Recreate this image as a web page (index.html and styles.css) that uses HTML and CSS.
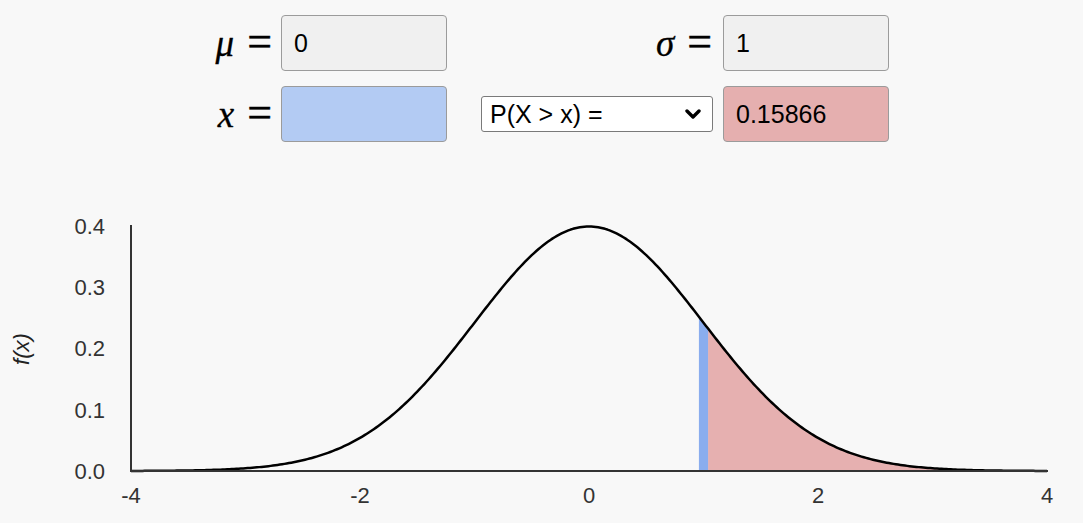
FILE: index.html
```html
<!DOCTYPE html>
<html>
<head>
<meta charset="utf-8">
<link rel="stylesheet" href="styles.css">
</head>
<body>
<div class="controls">
  <label class="mlabel"><i class="var">μ</i><span class="eq">=</span></label>
  <input class="box box-gray" type="text" value="0">
  <label class="mlabel mlabel-right"><i class="var">σ</i><span class="eq">=</span></label>
  <input class="box box-gray" type="text" value="1">

  <label class="mlabel"><i class="var">x</i><span class="eq">=</span></label>
  <input class="box box-blue" type="text" value="">
  <div class="select-wrap">
    <select class="prob">
      <option>P(X &lt; x) =</option>
      <option selected>P(X &gt; x) =</option>
      <option>P(X = x) =</option>
    </select>
    <svg class="chev" width="16" height="11" viewBox="0 0 16 11"><path d="M2 2 L8 8 L14 2" fill="none" stroke="#000" stroke-width="3.4" stroke-linecap="round" stroke-linejoin="round"/></svg>
  </div>
  <input class="box box-red" type="text" value="0.15866">
</div>
<svg class="chart" width="1083" height="381" viewBox="0 142 1083 381">
  <path id="areaRed" fill="#e6b0b0"/>
  <path id="areaBlue" fill="#8aadee"/>
  <path id="curve" fill="none" stroke="#000" stroke-width="2.5" stroke-linejoin="round"/>
  <line x1="131" y1="225" x2="131" y2="472" stroke="#333" stroke-width="2"/>
  <line x1="130" y1="471" x2="1048" y2="471" stroke="#333" stroke-width="2"/>
  <g class="ytick" text-anchor="end">
    <text x="105" y="226" dy="0.36em">0.4</text>
    <text x="105" y="287" dy="0.36em">0.3</text>
    <text x="105" y="348" dy="0.36em">0.2</text>
    <text x="105" y="410" dy="0.36em">0.1</text>
    <text x="105" y="471" dy="0.36em">0.0</text>
  </g>
  <g class="xtick" text-anchor="middle">
    <text x="131" y="495" dy="0.36em">-4</text>
    <text x="360" y="495" dy="0.36em">-2</text>
    <text x="589" y="495" dy="0.36em">0</text>
    <text x="818" y="495" dy="0.36em">2</text>
    <text x="1047" y="495" dy="0.36em">4</text>
  </g>
  <text class="ylabel" x="0" y="0" text-anchor="middle" dy="0.36em" transform="translate(21 349) rotate(-90)">f(x)</text>
</svg>
<script src="script.js"></script>
</body>
</html>
```

FILE: styles.css
```css
html, body {
  margin: 0;
  padding: 0;
  background: #f8f8f8;
}
body {
  font-family: "Liberation Sans", Arial, sans-serif;
  width: 1083px;
  height: 523px;
  overflow: hidden;
}
.controls {
  display: grid;
  grid-template-columns: 281px 166px 276px 166px;
  grid-template-rows: 56px 56px;
  row-gap: 15px;
  padding-top: 15px;
  height: 127px;
}
.mlabel {
  display: flex;
  align-items: center;
  justify-content: flex-end;
  padding-right: 9px;
  color: #000;
}
.mlabel-right {
  padding-right: 11px;
}
.var {
  font-family: "Liberation Serif", "Times New Roman", serif;
  font-style: italic;
  font-size: 37px;
  line-height: 1;
  margin-right: 13px;
  -webkit-text-stroke: 0.3px #000;
}
.eq {
  font-family: "Liberation Serif", "Times New Roman", serif;
  font-size: 44px;
  line-height: 1;
  margin-top: -3px;
  -webkit-text-stroke: 0.4px #000;
}
.box {
  box-sizing: border-box;
  width: 166px;
  height: 56px;
  margin: 0;
  padding: 0 12px;
  border: 1px solid #9b9b9b;
  border-radius: 4px;
  font-family: "Liberation Sans", Arial, sans-serif;
  font-size: 25px;
  color: #000;
  outline: none;
}
.box-gray { background: #f0f0f0; }
.box-blue { background: #b3cbf3; }
.box-red { background: #e5afaf; }
.select-wrap {
  position: relative;
  align-self: center;
  margin-left: 34px;
  width: 232px;
  height: 36px;
  margin-top: -1px;
}
.prob {
  appearance: none;
  -webkit-appearance: none;
  box-sizing: border-box;
  width: 232px;
  height: 36px;
  margin: 0;
  padding: 0 0 0 8px;
  border: 1px solid #7a7a7a;
  border-radius: 3px;
  background: #fff;
  font-family: "Liberation Sans", Arial, sans-serif;
  font-size: 25px;
  color: #000;
  outline: none;
}
.chev {
  position: absolute;
  right: 12px;
  top: 13px;
  pointer-events: none;
}
.chart {
  display: block;
}
.ytick text, .xtick text {
  font-family: "Liberation Sans", Arial, sans-serif;
  font-size: 22px;
  fill: #333;
}
.ylabel {
  font-family: "Liberation Sans", Arial, sans-serif;
  font-size: 22px;
  font-style: italic;
  fill: #222;
}
```

FILE: script.js
```js
(function () {
  var X = function (x) { return 589 + 114.5 * x; };
  var Y = function (v) { return 471 - 613 * v; };
  var f = function (x) { return Math.exp(-x * x / 2) / Math.sqrt(2 * Math.PI); };
  function line(a, b, n) {
    var s = [];
    for (var i = 0; i <= n; i++) {
      var x = a + (b - a) * i / n;
      s.push(X(x).toFixed(2) + ',' + Y(f(x)).toFixed(2));
    }
    return s;
  }
  function area(a, b, n) {
    return 'M' + X(a).toFixed(2) + ',471 L' + line(a, b, n).join(' L') + ' L' + X(b).toFixed(2) + ',471 Z';
  }
  document.getElementById('curve').setAttribute('d', 'M' + line(-4, 4, 400).join(' L'));
  document.getElementById('areaRed').setAttribute('d', area(1.04, 4, 200));
  document.getElementById('areaBlue').setAttribute('d', area(0.96, 1.04, 10));
})();
```
